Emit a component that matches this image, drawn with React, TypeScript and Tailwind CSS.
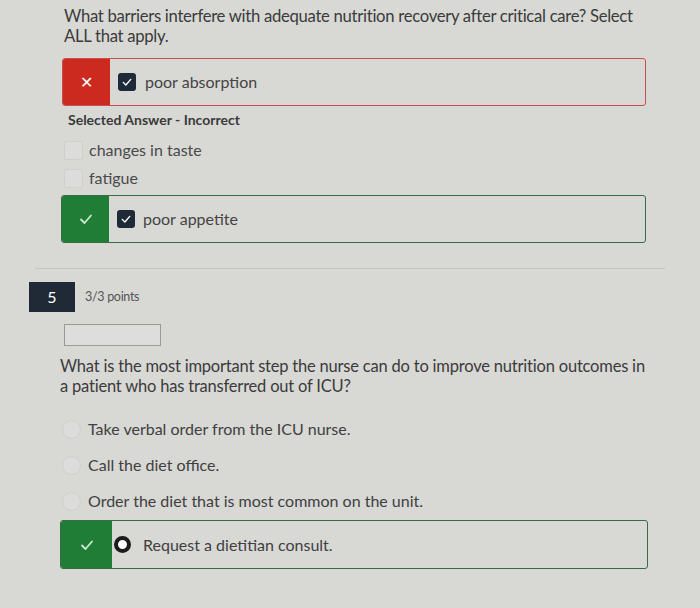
import React from "react";

const Check = ({ className = "" }: { className?: string }) => (
  <svg viewBox="0 0 16 16" className={className} fill="none" stroke="currentColor" strokeWidth="1.8" strokeLinecap="round" strokeLinejoin="round">
    <path d="M3 8.5 L6.5 12 L13 4.5" />
  </svg>
);

const CheckedBox = () => (
  <span className="w-[18px] h-[18px] rounded-[3px] bg-[#1f2a38] flex items-center justify-center shrink-0">
    <Check className="w-[12px] h-[12px] text-white" />
  </span>
);

export default function App() {
  return (
    <div className="w-[700px] h-[608px] bg-[#d8d8d5] overflow-hidden text-[#3b3b3b]" style={{ fontFamily: "Lato, 'Open Sans', sans-serif" }}>
      <div className="pl-[64px] pr-[40px] pt-[6px] text-[16.7px] leading-[20px] tracking-[-0.3px]">
        What barriers interfere with adequate nutrition recovery after critical care? Select ALL that apply.
      </div>

      <div className="ml-[62px] w-[584px] h-[48px] mt-[12px] border border-[#c65050] rounded-[3px] flex items-center overflow-hidden">
        <div className="w-[47px] h-full bg-[#cc2a1f] flex items-center justify-center text-white text-[16px]">✕</div>
        <div className="ml-[8px]"><CheckedBox /></div>
        <span className="ml-[9px] text-[16px] text-[#444]">poor absorption</span>
      </div>

      <div className="ml-[68px] mt-[5px] text-[14px] font-bold text-[#3a3a3a] leading-[18px]">Selected Answer - Incorrect</div>

      <div className="ml-[64px] mt-[11px] flex flex-col gap-[8px]">
        <div className="flex items-center h-[20px]">
          <span className="w-[19px] h-[19px] border border-[#cfcfcc] bg-[#dcdcda] rounded-[2px]" />
          <span className="ml-[6px] text-[16px] text-[#4a4a4a]">changes in taste</span>
        </div>
        <div className="flex items-center h-[20px]">
          <span className="w-[19px] h-[19px] border border-[#cfcfcc] bg-[#dcdcda] rounded-[2px]" />
          <span className="ml-[6px] text-[16px] text-[#4a4a4a]">fatigue</span>
        </div>
      </div>

      <div className="ml-[61px] w-[585px] h-[48px] mt-[7px] border border-[#3a6a42] rounded-[3px] flex items-center overflow-hidden">
        <div className="w-[47px] h-full bg-[#1f7d36] flex items-center justify-center">
          <Check className="w-[16px] h-[16px] text-[#cfe8d2]" />
        </div>
        <div className="ml-[8px]"><CheckedBox /></div>
        <span className="ml-[8px] text-[16px] text-[#444]">poor appetite</span>
      </div>

      <div className="ml-[35px] mr-[35px] mt-[25px] h-px bg-[#c4c4c1]" />

      <div className="flex items-center mt-[13px] ml-[29px]">
        <div className="w-[46px] h-[30px] bg-[#1f2a36] text-white flex items-center justify-center text-[16px]">5</div>
        <span className="ml-[10px] text-[12.5px] text-[#555] tracking-[-0.3px]">3/3 points</span>
      </div>

      <div className="ml-[64px] mt-[12px] w-[97px] h-[22px] border border-[#9a9a98] bg-[#dddddb]" />

      <div className="pl-[60px] pr-[50px] mt-[10px] text-[16.5px] leading-[20px] tracking-[-0.2px]">
        What is the most important step the nurse can do to improve nutrition outcomes in a patient who has transferred out of ICU?
      </div>

      <div className="ml-[62px] mt-[23px] flex flex-col gap-[16px]">
        {["Take verbal order from the ICU nurse.", "Call the diet office.", "Order the diet that is most common on the unit."].map((t) => (
          <div key={t} className="flex items-center h-[20px]">
            <span className="w-[19px] h-[19px] rounded-full border border-[#cfcfcc] bg-[#dcdcda]" />
            <span className="ml-[7px] text-[16px] text-[#404040]">{t}</span>
          </div>
        ))}
      </div>

      <div className="ml-[60px] w-[588px] h-[49px] mt-[9px] border border-[#3a6a42] rounded-[3px] flex items-center overflow-hidden">
        <div className="w-[51px] h-full bg-[#1f7d36] flex items-center justify-center">
          <Check className="w-[16px] h-[16px] text-[#cfe8d2]" />
        </div>
        <span className="ml-[2px] w-[17px] h-[17px] rounded-full border-[4px] border-[#1c1c1c] bg-white" />
        <span className="ml-[12px] text-[16px] text-[#404040]">Request a dietitian consult.</span>
      </div>
    </div>
  );
}
